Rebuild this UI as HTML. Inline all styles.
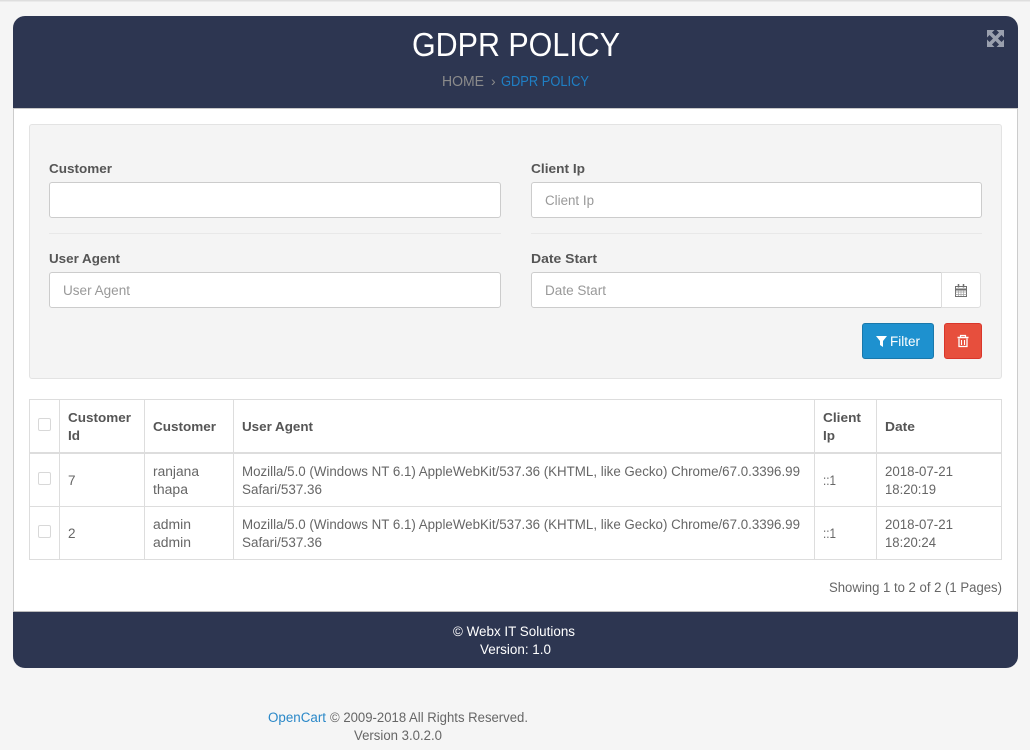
<!DOCTYPE html>
<html lang="en">
<head>
<meta charset="utf-8">
<title>GDPR Policy</title>
<style>
html,body{margin:0;padding:0;width:1030px;height:750px;overflow:hidden;background:#f5f5f5}
body{position:relative;font-family:"Liberation Sans",sans-serif}
.b{position:absolute;box-sizing:border-box}
.in{background:#fff;border:1px solid #ccc;border-radius:3px}
svg.t{position:absolute;left:0;top:0}
text{font-family:"Liberation Sans",sans-serif;font-size:13.5px;fill:#666}
.l{font-weight:bold;fill:#555;font-size:13px}
.p{fill:#999}
.w{fill:#fff}
</style>
</head>
<body>
<div class="b" style="left:0;top:0;width:1030px;height:2px;background:linear-gradient(#d8d8d8,#f0f0f0)"></div>
<div class="b" style="left:13px;top:16px;width:1005px;height:652px;background:#fff;border-left:1px solid #ccc;border-right:1px solid #ccc;border-radius:12px"></div>
<div class="b" style="left:13px;top:16px;width:1005px;height:93px;background:#2d3651;border-bottom:1px solid #c8c8c8;border-radius:12px 12px 0 0"></div>
<div class="b" style="left:13px;top:611px;width:1005px;height:57px;background:#2d3651;border-top:1px solid #bbb;border-radius:0 0 12px 12px"></div>

<div class="b" style="left:29px;top:124px;width:973px;height:255px;background:#f4f4f4;border:1px solid #e3e3e3;border-radius:3px"></div>
<div class="b in" style="left:49px;top:182px;width:452px;height:36px"></div>
<div class="b in" style="left:531px;top:182px;width:451px;height:36px"></div>
<div class="b" style="left:49px;top:233px;width:452px;height:1px;background:#e8e8e8"></div>
<div class="b" style="left:531px;top:233px;width:451px;height:1px;background:#e8e8e8"></div>
<div class="b in" style="left:49px;top:272px;width:452px;height:36px"></div>
<div class="b in" style="left:531px;top:272px;width:411px;height:36px;border-radius:3px 0 0 3px"></div>
<div class="b" style="left:941px;top:272px;width:40px;height:36px;background:#fff;border:1px solid #ddd;border-radius:0 3px 3px 0"></div>
<div class="b" style="left:862px;top:323px;width:72px;height:36px;background:#1e91cf;border:1px solid #1978ab;border-radius:3px"></div>
<div class="b" style="left:944px;top:323px;width:38px;height:36px;background:#e74f3d;border:1px solid #d9362b;border-radius:3px"></div>

<table class="b" style="left:29px;top:399px;width:973px;height:161px;border-collapse:collapse;table-layout:fixed;background:#fff">
<colgroup><col style="width:30px"><col style="width:85px"><col style="width:89px"><col style="width:581px"><col style="width:62px"><col></colgroup>
<tr style="height:53px"><td style="border:1px solid #ddd;border-bottom:2px solid #ddd"></td><td style="border:1px solid #ddd;border-bottom:2px solid #ddd"></td><td style="border:1px solid #ddd;border-bottom:2px solid #ddd"></td><td style="border:1px solid #ddd;border-bottom:2px solid #ddd"></td><td style="border:1px solid #ddd;border-bottom:2px solid #ddd"></td><td style="border:1px solid #ddd;border-bottom:2px solid #ddd"></td></tr>
<tr style="height:53px"><td style="border:1px solid #ddd"></td><td style="border:1px solid #ddd"></td><td style="border:1px solid #ddd"></td><td style="border:1px solid #ddd"></td><td style="border:1px solid #ddd"></td><td style="border:1px solid #ddd"></td></tr>
<tr style="height:53px"><td style="border:1px solid #ddd"></td><td style="border:1px solid #ddd"></td><td style="border:1px solid #ddd"></td><td style="border:1px solid #ddd"></td><td style="border:1px solid #ddd"></td><td style="border:1px solid #ddd"></td></tr>
</table>
<div class="b" style="left:38px;top:418px;width:13px;height:13px;background:#fff;border:1px solid #d8d8d8;border-radius:2px"></div>
<div class="b" style="left:38px;top:472px;width:13px;height:13px;background:#fff;border:1px solid #d8d8d8;border-radius:2px"></div>
<div class="b" style="left:38px;top:525px;width:13px;height:13px;background:#fff;border:1px solid #d8d8d8;border-radius:2px"></div>

<svg class="t" width="1030" height="750" viewBox="0 0 1030 750" xmlns="http://www.w3.org/2000/svg">
<text x="412" y="56" textLength="208" lengthAdjust="spacingAndGlyphs" class="w" style="font-size:33px">GDPR POLICY</text>
<text x="442" y="86" textLength="42" lengthAdjust="spacingAndGlyphs" style="font-size:15px;fill:#8b8b8b">HOME</text>
<text x="491" y="86" style="font-size:14px;fill:#8b8b8b">›</text>
<text x="501" y="86" textLength="88" lengthAdjust="spacingAndGlyphs" style="font-size:15px;fill:#1f7fc4">GDPR POLICY</text>

<g fill="#9aa0ae">
<path d="M987 30h7.500l-7.500 7.500zM1004 30v7.500l-7.500-7.500zM987 47v-7.500l7.500 7.500zM1004 47h-7.500l7.500-7.500z"/>
</g>
<path d="M990 33l11 11M1001 33l-11 11" fill="none" stroke="#9aa0ae" stroke-width="3.500"/>

<text x="49" y="173" textLength="63" lengthAdjust="spacingAndGlyphs" class="l">Customer</text>
<text x="531" y="173" textLength="54" lengthAdjust="spacingAndGlyphs" class="l">Client Ip</text>
<text x="49" y="263" textLength="71" lengthAdjust="spacingAndGlyphs" class="l">User Agent</text>
<text x="531" y="263" textLength="66" lengthAdjust="spacingAndGlyphs" class="l">Date Start</text>
<text x="545" y="205" textLength="49" lengthAdjust="spacingAndGlyphs" class="p">Client Ip</text>
<text x="63" y="295" textLength="67" lengthAdjust="spacingAndGlyphs" class="p">User Agent</text>
<text x="545" y="295" textLength="61" lengthAdjust="spacingAndGlyphs" class="p">Date Start</text>

<g fill="none" stroke="#6f6f6f">
<rect x="955.500" y="286.500" width="11" height="10" stroke-width="1"/>
<path d="M955 289.500h12" stroke-width="2"/>
<path d="M955.500 292h11M955.500 294.500h11M958.500 290v6M961 290v6M963.500 290v6" stroke-width=".7" stroke="#a0a0a0"/>
<path d="M958.500 284v3.500M963.500 284v3.500" stroke-width="1.500"/>
</g>

<path d="M876 336h11l-4 5v6l-3-2v-4z" fill="#fff"/>
<text x="890" y="346" textLength="30" lengthAdjust="spacingAndGlyphs" class="w">Filter</text>
<g fill="none" stroke="#fff">
<path d="M957.500 337.500h11" stroke-width="1.500"/>
<path d="M960.500 337v-1.500h5v1.500" stroke-width="1.200"/>
<path d="M959 338.500v8h8v-8" stroke-width="1.300"/>
<path d="M961.500 340v5M964.500 340v5" stroke-width="1.100"/>
</g>

<text x="68" y="422" textLength="63" lengthAdjust="spacingAndGlyphs" class="l">Customer</text>
<text x="68" y="440" textLength="12" lengthAdjust="spacingAndGlyphs" class="l">Id</text>
<text x="153" y="431" textLength="63" lengthAdjust="spacingAndGlyphs" class="l">Customer</text>
<text x="242" y="431" textLength="71" lengthAdjust="spacingAndGlyphs" class="l">User Agent</text>
<text x="823" y="422" textLength="38" lengthAdjust="spacingAndGlyphs" class="l">Client</text>
<text x="823" y="440" textLength="12" lengthAdjust="spacingAndGlyphs" class="l">Ip</text>
<text x="885" y="431" textLength="30" lengthAdjust="spacingAndGlyphs" class="l">Date</text>

<text x="68" y="485">7</text>
<text x="153" y="476" textLength="46" lengthAdjust="spacingAndGlyphs">ranjana</text>
<text x="153" y="494" textLength="35" lengthAdjust="spacingAndGlyphs">thapa</text>
<text x="242" y="476" textLength="558" lengthAdjust="spacingAndGlyphs">Mozilla/5.0 (Windows NT 6.1) AppleWebKit/537.36 (KHTML, like Gecko) Chrome/67.0.3396.99</text>
<text x="242" y="494" textLength="80" lengthAdjust="spacingAndGlyphs">Safari/537.36</text>
<text x="823" y="485" textLength="13" lengthAdjust="spacingAndGlyphs">::1</text>
<text x="885" y="476" textLength="68" lengthAdjust="spacingAndGlyphs">2018-07-21</text>
<text x="885" y="494" textLength="51" lengthAdjust="spacingAndGlyphs">18:20:19</text>

<text x="68" y="538">2</text>
<text x="153" y="529" textLength="38" lengthAdjust="spacingAndGlyphs">admin</text>
<text x="153" y="547" textLength="38" lengthAdjust="spacingAndGlyphs">admin</text>
<text x="242" y="529" textLength="558" lengthAdjust="spacingAndGlyphs">Mozilla/5.0 (Windows NT 6.1) AppleWebKit/537.36 (KHTML, like Gecko) Chrome/67.0.3396.99</text>
<text x="242" y="547" textLength="80" lengthAdjust="spacingAndGlyphs">Safari/537.36</text>
<text x="823" y="538" textLength="13" lengthAdjust="spacingAndGlyphs">::1</text>
<text x="885" y="529" textLength="68" lengthAdjust="spacingAndGlyphs">2018-07-21</text>
<text x="885" y="547" textLength="51" lengthAdjust="spacingAndGlyphs">18:20:24</text>

<text x="829" y="592" textLength="173" lengthAdjust="spacingAndGlyphs">Showing 1 to 2 of 2 (1 Pages)</text>

<text x="453" y="636" textLength="122" lengthAdjust="spacingAndGlyphs" class="w">© Webx IT Solutions</text>
<text x="480" y="654" textLength="71" lengthAdjust="spacingAndGlyphs" class="w">Version: 1.0</text>

<text x="268" y="722" textLength="58" lengthAdjust="spacingAndGlyphs" style="fill:#2a88c8">OpenCart</text>
<text x="330" y="722" textLength="198" lengthAdjust="spacingAndGlyphs">© 2009-2018 All Rights Reserved.</text>
<text x="354" y="740" textLength="88" lengthAdjust="spacingAndGlyphs">Version 3.0.2.0</text>
</svg>
</body>
</html>
